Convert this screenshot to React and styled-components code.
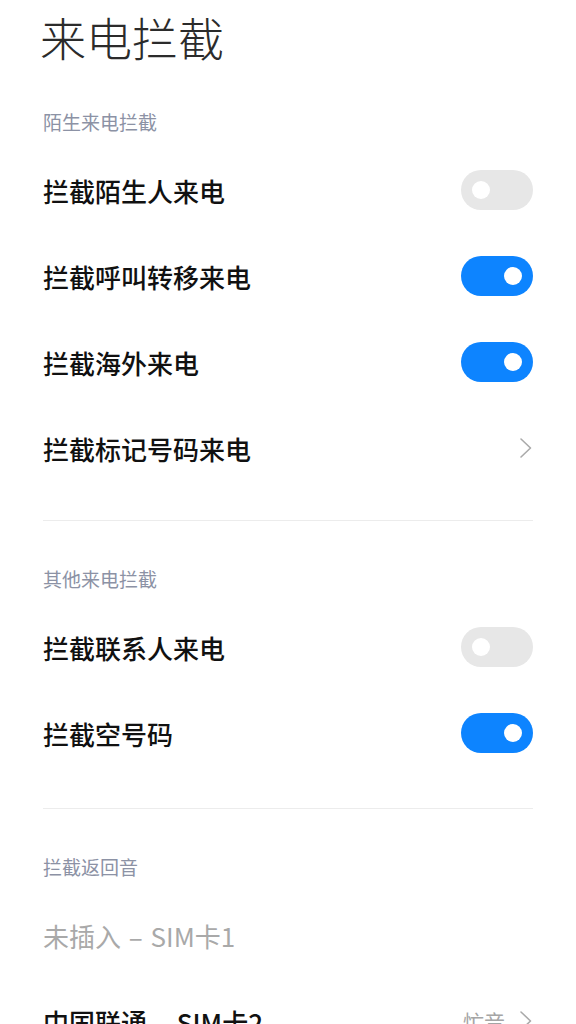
import React from 'react';
import styled, { createGlobalStyle } from 'styled-components';

const GlobalStyle = createGlobalStyle`
  html, body {
    margin: 0;
    padding: 0;
    background: #fff;
  }
  body {
    font-family: "Noto Sans CJK SC", "Noto Sans", sans-serif;
    -webkit-font-smoothing: antialiased;
  }
`;

const Page = styled.div`
  width: 576px;
  height: 1024px;
  overflow: hidden;
  padding: 0 43px;
  box-sizing: border-box;
`;

const Title = styled.h1`
  margin: 0 0 0 -3px;
  height: 80px;
  line-height: 72px;
  font-size: 46px;
  font-weight: 300;
  color: #2b2b2b;
`;

const Section = styled.section`
  padding-top: ${p => p.$top}px;
  padding-bottom: ${p => p.$bottom || 0}px;
  border-bottom: ${p => (p.$last ? 'none' : '1px solid #ececec')};
`;

const SectionHeader = styled.div`
  height: 24px;
  line-height: 24px;
  margin-bottom: 13px;
  font-size: 19px;
  color: #8c92a5;
`;

const Row = styled.div`
  height: 86px;
  display: flex;
  align-items: center;
  justify-content: space-between;
`;

const Label = styled.span`
  font-size: 26px;
  font-weight: ${p => (p.$disabled ? 400 : 500)};
  color: ${p => (p.$disabled ? '#a9a9a9' : '#111')};
  word-spacing: 2px;
`;

const Toggle = styled.div`
  width: 72px;
  height: 40px;
  border-radius: 20px;
  background: ${p => (p.$on ? '#0d84ff' : '#e7e7e7')};
  display: flex;
  align-items: center;
  justify-content: ${p => (p.$on ? 'flex-end' : 'flex-start')};
  padding: 0 11px;
  box-sizing: border-box;
`;

const Knob = styled.div`
  width: 18px;
  height: 18px;
  border-radius: 50%;
  background: #fff;
`;

const Trail = styled.div`
  display: flex;
  align-items: center;
  gap: 14px;
`;

const Value = styled.span`
  font-size: 21px;
  color: #a5a5a5;
`;

const Chevron = () => (
  <svg width="14" height="22" viewBox="0 0 14 22" fill="none">
    <path d="M2 2 L11.5 11 L2 20" stroke="#aaaaaa" strokeWidth="1.6" strokeLinecap="round" strokeLinejoin="round" />
  </svg>
);

const Switch = ({ on }) => (
  <Toggle $on={on}>
    <Knob />
  </Toggle>
);

export default function App() {
  return (
    <>
      <GlobalStyle />
      <Page>
        <Title>来电拦截</Title>
        <Section $top={30} $bottom={29}>
          <SectionHeader>陌生来电拦截</SectionHeader>
          <Row>
            <Label>拦截陌生人来电</Label>
            <Switch on={false} />
          </Row>
          <Row>
            <Label>拦截呼叫转移来电</Label>
            <Switch on />
          </Row>
          <Row>
            <Label>拦截海外来电</Label>
            <Switch on />
          </Row>
          <Row>
            <Label>拦截标记号码来电</Label>
            <Chevron />
          </Row>
        </Section>
        <Section $top={46} $bottom={32}>
          <SectionHeader>其他来电拦截</SectionHeader>
          <Row>
            <Label>拦截联系人来电</Label>
            <Switch on={false} />
          </Row>
          <Row>
            <Label>拦截空号码</Label>
            <Switch on />
          </Row>
        </Section>
        <Section $top={46} $last>
          <SectionHeader>拦截返回音</SectionHeader>
          <Row>
            <Label $disabled>未插入 – SIM卡1</Label>
          </Row>
          <Row>
            <Label>中国联通 – SIM卡2</Label>
            <Trail>
              <Value>忙音</Value>
              <Chevron />
            </Trail>
          </Row>
        </Section>
      </Page>
    </>
  );
}
